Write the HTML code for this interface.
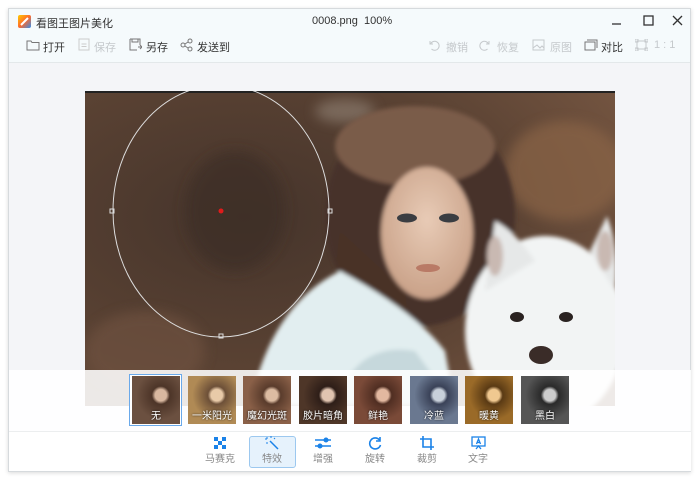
<!DOCTYPE html>
<html><head><meta charset="utf-8"><style>
*{margin:0;padding:0;box-sizing:border-box}
body{width:700px;height:480px;background:#fff;font-family:"Liberation Sans","Noto Sans CJK SC",sans-serif;position:relative;overflow:hidden}
.win{position:absolute;left:8px;top:8px;width:683px;height:464px;border:1px solid #d6dadd;background:#f4f5f8;box-shadow:0 1px 4px rgba(0,0,0,.15)}
.top{position:absolute;left:0;top:0;width:100%;height:54px;background:#f5fafc;border-bottom:1px solid #e3e8ea}
.t{position:absolute;font-size:11px;color:#333;white-space:nowrap}
.g{color:#c5c9cc}
.ic{position:absolute}
.thumb{position:absolute;top:376px;width:48px;height:48px;overflow:hidden}
.thumb span{position:absolute;bottom:2px;left:0;width:100%;text-align:center;font-size:10px;color:#fff;text-shadow:0 0 2px #000}
.bt{position:absolute;top:450px;font-size:10px;color:#888;text-align:center;width:50px}
</style></head><body>
<div class="win">
 <div class="top"></div>
</div>
<svg class="ic" style="left:18px;top:15px" width="13" height="13"><defs><linearGradient id="lg" x1="0" y1="0" x2="1" y2="1"><stop offset="0" stop-color="#ffcc00"/><stop offset=".5" stop-color="#ff6a2a"/><stop offset="1" stop-color="#2f8ef0"/></linearGradient></defs><rect width="13" height="13" rx="2" fill="url(#lg)"/><path d="M3 10 L10 3" stroke="#fff" stroke-width="2"/></svg>
<div class="t" style="left:36px;top:15px">看图王图片美化</div>
<div class="t" style="left:312px;top:15px">0008.png&nbsp;&nbsp;100%</div>
<svg class="ic" style="left:610px;top:14px" width="80" height="14" fill="none" stroke="#333" stroke-width="1.3"><path d="M2 10h9"/><rect x="34" y="2" width="9" height="9"/><path d="M63 2l9 9M72 2l-9 9"/></svg>
<svg class="ic" style="left:26px;top:39px" width="14" height="12" fill="none" stroke="#777"><path d="M1 2h4l1 1.5h7v7.5h-12z"/></svg>
<div class="t" style="left:43px;top:39px">打开</div>
<svg class="ic" style="left:78px;top:38px" width="12" height="13" fill="none" stroke="#ccc"><rect x="1" y="1" width="10" height="11"/><path d="M3.5 6h5M3.5 8.5h5"/></svg>
<div class="t g" style="left:94px;top:39px">保存</div>
<svg class="ic" style="left:129px;top:38px" width="13" height="13" fill="none" stroke="#777"><path d="M1 1h10v6M1 1v11h7"/><path d="M3 1v3h6V1M9 9h4M11 7l2 2-2 2"/></svg>
<div class="t" style="left:146px;top:39px">另存</div>
<svg class="ic" style="left:180px;top:38px" width="13" height="14" fill="none" stroke="#777"><circle cx="3" cy="7" r="2"/><circle cx="10" cy="3" r="2"/><circle cx="10" cy="11" r="2"/><path d="M5 6l3-2M5 8l3 2"/></svg>
<div class="t" style="left:197px;top:39px">发送到</div>
<svg class="ic" style="left:428px;top:39px" width="12" height="12" fill="none" stroke="#c5c9cc"><path d="M2 2v3h3M2.5 5a4.5 4.5 0 1 1 1 5"/></svg>
<div class="t g" style="left:446px;top:39px">撤销</div>
<svg class="ic" style="left:479px;top:39px" width="12" height="12" fill="none" stroke="#c5c9cc"><path d="M10 2v3h-3M9.5 5a4.5 4.5 0 1 0 -1 5"/></svg>
<div class="t g" style="left:497px;top:39px">恢复</div>
<svg class="ic" style="left:532px;top:39px" width="13" height="12" fill="none" stroke="#c5c9cc"><rect x="1" y="1" width="11" height="10"/><path d="M1 9l4-3 3 3 2-2 2 2"/></svg>
<div class="t g" style="left:550px;top:39px">原图</div>
<svg class="ic" style="left:584px;top:39px" width="14" height="12" fill="none" stroke="#777"><rect x="1" y="3" width="10" height="8"/><path d="M3 1h10v8"/></svg>
<div class="t" style="left:601px;top:39px">对比</div>
<svg class="ic" style="left:635px;top:39px" width="13" height="12" fill="none" stroke="#c5c9cc"><rect x="2" y="2" width="9" height="8"/><path d="M0 0h3v3h-3zM10 0h3v3h-3zM0 9h3v3h-3zM10 9h3v3h-3z"/></svg>
<div class="t g" style="left:654px;top:39px">1 : 1</div>
<svg class="ic" style="left:85px;top:91px" width="530" height="315">
<defs>
<radialGradient id="bg" cx=".3" cy=".4" r=".8"><stop offset="0" stop-color="#45342b"/><stop offset=".6" stop-color="#5a4233"/><stop offset="1" stop-color="#735440"/></radialGradient>
<radialGradient id="face" cx=".5" cy=".4" r=".6"><stop offset="0" stop-color="#e8cbb6"/><stop offset="1" stop-color="#c9a188"/></radialGradient>
<filter id="bl"><feGaussianBlur stdDeviation="6"/></filter>
<filter id="bl2"><feGaussianBlur stdDeviation="2"/></filter>
</defs>
<rect width="530" height="315" fill="url(#bg)"/>
<rect width="530" height="2" fill="#222"/>
<g filter="url(#bl)" opacity=".7">
<ellipse cx="260" cy="20" rx="30" ry="12" fill="#8a7a6d"/>
<ellipse cx="480" cy="80" rx="60" ry="50" fill="#8b6547"/>
<ellipse cx="60" cy="260" rx="60" ry="40" fill="#6e5140"/>
<ellipse cx="150" cy="120" rx="50" ry="60" fill="#3e2f28"/>
</g>
<g filter="url(#bl2)">
<ellipse cx="335" cy="125" rx="95" ry="110" fill="#46302a"/>
<ellipse cx="330" cy="55" rx="80" ry="40" fill="#7a5c48"/>
<path d="M255 140 Q240 230 300 290 L330 300 L320 200Z" fill="#4a3328"/>
<ellipse cx="342" cy="142" rx="46" ry="66" fill="url(#face)"/>
<path d="M165 315 Q185 215 255 180 Q330 220 360 260 L370 315Z" fill="#e2eef0"/>
<path d="M250 315 Q270 250 330 260 L370 315Z" fill="#c6d8dc"/>
<ellipse cx="460" cy="240" rx="80" ry="95" fill="#f2f4f4"/>
<path d="M400 200 L410 130 Q430 140 450 170Z" fill="#e6e8e8"/>
<path d="M505 160 L522 125 Q535 160 530 200Z" fill="#e6e8e8"/>
<ellipse cx="410" cy="165" rx="8" ry="20" fill="#c9b9b2"/>
<ellipse cx="520" cy="160" rx="8" ry="20" fill="#c9b9b2"/>
</g>
<ellipse cx="322" cy="127" rx="10" ry="4.5" fill="#3a3d42"/>
<ellipse cx="364" cy="127" rx="10" ry="4.5" fill="#3a3d42"/>
<ellipse cx="343" cy="177" rx="12" ry="4" fill="#b97a66"/>
<ellipse cx="432" cy="226" rx="7" ry="5" fill="#2a2220"/>
<ellipse cx="481" cy="226" rx="7" ry="5" fill="#2a2220"/>
<ellipse cx="456" cy="264" rx="12" ry="9" fill="#3a2c28"/>
<ellipse cx="136" cy="120" rx="108" ry="126" fill="none" stroke="#ddd" stroke-width="1"/>
<rect x="25" y="118" width="4" height="4" fill="none" stroke="#ddd"/>
<rect x="243" y="118" width="4" height="4" fill="none" stroke="#ddd"/>
<rect x="134" y="243" width="4" height="4" fill="none" stroke="#ddd"/>
<circle cx="136" cy="120" r="2.5" fill="#e01b1b"/>
</svg>
<div style="position:absolute;left:9px;top:370px;width:682px;height:61px;background:rgba(255,255,255,.88)"></div>
<div style="position:absolute;left:9px;top:431px;width:682px;height:40px;background:#fff;border-top:1px solid #eceeef"></div>
<div style="position:absolute;left:129px;top:374px;width:53px;height:52px;border:1px solid #6aa9ea;background:#fff"></div>
<div class="thumb" style="left:132px;background:radial-gradient(circle at 60% 40%,#d9b8a0 0 14%,#4d3528 22%,#6b5040 60%);"><span>无</span></div>
<div class="thumb" style="left:188px;background:radial-gradient(circle at 60% 40%,#e8caa8 0 14%,#6d5038 22%,#b08a55 60%);"><span>一米阳光</span></div>
<div class="thumb" style="left:243px;background:radial-gradient(circle at 60% 40%,#dcbca2 0 14%,#5a3c2c 22%,#8a6048 60%);"><span>魔幻光斑</span></div>
<div class="thumb" style="left:299px;background:radial-gradient(circle at 60% 40%,#e0c4b0 0 14%,#2e1e18 22%,#4e3628 60%);"><span>胶片暗角</span></div>
<div class="thumb" style="left:354px;background:radial-gradient(circle at 60% 40%,#e2b8a0 0 14%,#502e22 22%,#7a4a38 60%);"><span>鲜艳</span></div>
<div class="thumb" style="left:410px;background:radial-gradient(circle at 60% 40%,#c8d0da 0 14%,#3a4258 22%,#6a7890 60%);"><span>冷蓝</span></div>
<div class="thumb" style="left:465px;background:radial-gradient(circle at 60% 40%,#f0c890 0 14%,#5a3a14 22%,#9a6a28 60%);"><span>暖黄</span></div>
<div class="thumb" style="left:521px;background:radial-gradient(circle at 60% 40%,#ccc 0 14%,#2a2a2a 22%,#555 60%);"><span>黑白</span></div>
<div style="position:absolute;left:249px;top:436px;width:47px;height:32px;border:1px solid #9cc8ef;background:#e6f2fc;border-radius:3px"></div>
<svg class="ic" style="left:214px;top:437px" width="12" height="12" fill="#1a82e8"><rect x="0" y="0" width="4" height="4"/><rect x="8" y="0" width="4" height="4"/><rect x="4" y="4" width="4" height="4"/><rect x="0" y="8" width="4" height="4"/><rect x="8" y="8" width="4" height="4"/></svg>
<div class="bt" style="left:195px">马赛克</div>
<svg class="ic" style="left:265px;top:436px" width="14" height="14" fill="none" stroke="#1a82e8" stroke-width="1.5"><path d="M5 5l8 8"/><path d="M2 1v2M0 3h2M6 0v2M9 3l1-1M1 7h2" stroke-width="1"/></svg>
<div class="bt" style="left:247px">特效</div>
<svg class="ic" style="left:315px;top:437px" width="16" height="12" fill="none" stroke="#1a82e8" stroke-width="1.5"><path d="M0 3h16M0 9h16"/><circle cx="11" cy="3" r="1.8" fill="#1a82e8"/><circle cx="5" cy="9" r="1.8" fill="#1a82e8"/></svg>
<div class="bt" style="left:298px">增强</div>
<svg class="ic" style="left:368px;top:436px" width="14" height="14" fill="none" stroke="#1a82e8" stroke-width="1.6"><path d="M11.5 4A5.5 5.5 0 1 0 12.5 9"/><path d="M12 1v4h-4" /></svg>
<div class="bt" style="left:350px">旋转</div>
<svg class="ic" style="left:420px;top:436px" width="14" height="14" fill="none" stroke="#1a82e8" stroke-width="1.6"><path d="M3 0v11h11M0 3h11v11"/></svg>
<div class="bt" style="left:402px">裁剪</div>
<svg class="ic" style="left:471px;top:436px" width="15" height="14" fill="none" stroke="#1a82e8" stroke-width="1.3"><rect x="1" y="1" width="13" height="9"/><path d="M5 13l2.5-3 2.5 3M5.5 8l2-5 2 5M6 6.5h3"/></svg>
<div class="bt" style="left:453px">文字</div>
</body></html>
